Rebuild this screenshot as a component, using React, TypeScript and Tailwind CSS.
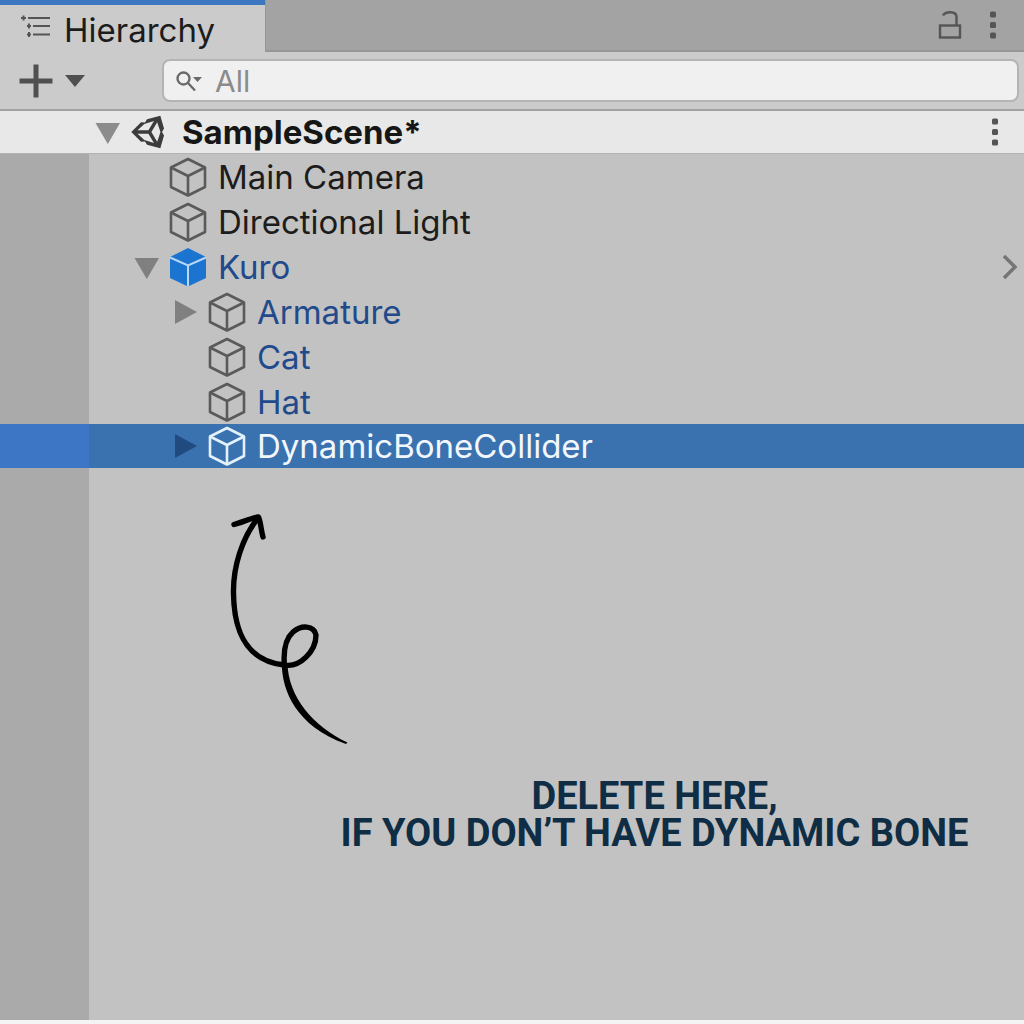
import clsx from "clsx";

type Node = {
  name: string;
  depth: 1 | 2;
  fold?: "open" | "closed";
  prefab?: boolean;
  selected?: boolean;
};

const nodes: Node[] = [
  { name: "Main Camera", depth: 1 },
  { name: "Directional Light", depth: 1 },
  { name: "Kuro", depth: 1, fold: "open", prefab: true },
  { name: "Armature", depth: 2, fold: "closed", prefab: true },
  { name: "Cat", depth: 2, prefab: true },
  { name: "Hat", depth: 2, prefab: true },
  { name: "DynamicBoneCollider", depth: 2, fold: "closed", selected: true },
];

const indent = {
  1: "pl-[45px]",
  2: "pl-[84px]",
};

function FoldArrow({ open, className }: { open: boolean; className: string }) {
  return (
    <svg viewBox="0 0 26 26" className={clsx("w-[26px] h-[26px]", className)} fill="currentColor">
      <path d={open ? "M0.5 4 H25 L12.8 25 Z" : "M2 1 L24 13 L2 25 Z"} />
    </svg>
  );
}

function CubeIcon({ className }: { className: string }) {
  return (
    <svg
      viewBox="0 0 38 40"
      className={clsx("w-[38px] h-10", className)}
      fill="none"
      stroke="currentColor"
      strokeWidth="2.6"
      strokeLinejoin="round"
    >
      <path d="M19 2 L36 10.5 V30 L19 38.5 L2 30 V10.5 Z" />
      <path d="M2 10.5 L19 19 L36 10.5 M19 19 V38.5" />
    </svg>
  );
}

function PrefabIcon() {
  return (
    <svg viewBox="0 0 38 40" className="w-[38px] h-10">
      <path d="M19 1 L37 10 V31 L19 39.5 L1 31 V10 Z" fill="#1a74d0" />
      <path d="M1 10.5 L19 18.5 L37 10.5 M19 18.5 V39.5" fill="none" stroke="#b9d8f4" strokeWidth="2" />
    </svg>
  );
}

function SceneIcon() {
  return (
    <svg viewBox="0 0 24 24" className="w-[34px] h-[34px]" fill="#3c3c3c" fillRule="evenodd">
      <path d="M20.7 0.6 L11.3 3 L9.9 5.3 L7.1 5.2 L0.2 12 L7.1 18.8 L9.9 18.7 L11.3 21 L20.7 23.4 L23.3 14.4 L21.9 12 L23.3 9.6 Z M14.4 12 L18.5 5.2 L20.8 12 L18.5 18.8 Z M16.2 4.2 L12.3 10.8 H4.6 L9.4 6.4 Z M16.2 19.8 L12.3 13.2 H4.6 L9.4 17.6 Z" />
    </svg>
  );
}

function KebabIcon() {
  return (
    <svg viewBox="0 0 8 28" className="w-2 h-7" fill="#555555">
      <rect x="1" y="0.5" width="6" height="6" rx="1.5" />
      <rect x="1" y="11" width="6" height="6" rx="1.5" />
      <rect x="1" y="21.5" width="6" height="6" rx="1.5" />
    </svg>
  );
}

function TabBar() {
  return (
    <div className="flex items-stretch justify-between h-[52px] bg-[#a3a3a3]">
      <button className="flex items-start w-[265px] pt-[5px] pl-[21px] gap-[13px] border-t-5 border-[#3d76c0] bg-[#cbcbcb] text-[#1c1c1c]">
        <svg viewBox="0 0 30 24" className="w-[30px] h-6 mt-1" fill="none" stroke="#555555" strokeWidth="2">
          <path d="M0 4 H5 M2.5 1.5 V6.5 M7 4 H29 M6 12 H10 M8 9.5 V14.5 M12 12 H29 M6 20.5 H10 M8 18 V23 M12 20.5 H29" />
        </svg>
        Hierarchy
      </button>
      <div className="flex grow items-center justify-end gap-[27px] pr-[27px] border-b-2 border-l border-[#979797]">
        <button aria-label="Lock">
          <svg viewBox="0 0 24 30" className="w-6 h-[30px]" fill="none" stroke="#555555" strokeWidth="2.4">
            <rect x="2" y="15.5" width="20" height="12" />
            <path d="M5 5.5 C7 1.5 18.5 0.5 18.5 7 V15.5" />
          </svg>
        </button>
        <button aria-label="Tab options">
          <KebabIcon />
        </button>
      </div>
    </div>
  );
}

function Toolbar() {
  return (
    <div className="flex items-center h-[59px] pl-[19px] pr-[5px] border-b-2 border-[#a2a2a2] bg-[#cbcbcb]">
      <button aria-label="Create" className="flex items-center gap-3 w-[143px]">
        <svg viewBox="0 0 34 34" className="w-[34px] h-[34px]" stroke="#505050" strokeWidth="5">
          <path d="M17 0.5 V33.5 M0.5 17 H33.5" />
        </svg>
        <svg viewBox="0 0 20 12" className="w-5 h-3" fill="#505050">
          <path d="M0 0 H20 L10 12 Z" />
        </svg>
      </button>
      <label className="flex grow items-center h-[43px] pl-3 gap-[13px] rounded-lg border-2 border-[#b4b4b4] bg-[#f0f0f0] text-[30px]">
        <svg viewBox="0 0 26 22" className="w-[26px] h-[22px]" fill="none" stroke="#6a6a6a" strokeWidth="2.4">
          <circle cx="7.5" cy="8.5" r="6" />
          <path d="M12 13 L19 20.5" />
          <path d="M17 7 H26 L21.5 12 Z" fill="#6a6a6a" stroke="none" />
        </svg>
        <input
          type="text"
          aria-label="Search hierarchy"
          placeholder="All"
          className="grow min-w-0 bg-transparent outline-none placeholder:text-[#8b8b8b]"
        />
      </label>
    </div>
  );
}

function SceneRow() {
  return (
    <div className="flex items-center h-[43px] pl-[95px] pr-[25px] border-b border-[#b4b4b4] bg-[#e8e8e8]">
      <FoldArrow open className="text-[#8c8c8c]" />
      <div className="flex grow items-center pl-[10px] gap-[17px]">
        <SceneIcon />
        <span className="font-bold text-[#161616]">SampleScene*</span>
      </div>
      <button aria-label="Scene options">
        <KebabIcon />
      </button>
    </div>
  );
}

function TreeRow({ node }: { node: Node }) {
  const { name, depth, fold, prefab, selected } = node;
  const isRoot = prefab && depth === 1;

  return (
    <li
      className={clsx(
        "grid grid-cols-[89px_1fr]",
        selected ? "h-11 bg-[#3a72b0] text-[#f2f7fc]" : "h-[45px] bg-[#c2c2c2]",
        !selected && (prefab ? "text-[#214a8c]" : "text-[#1c1c1c]"),
      )}
    >
      <div className={selected ? "bg-[#3e76c6]" : "bg-[#aaaaaa]"} />
      <div className={clsx("flex items-center pr-[6px]", indent[depth])}>
        <div className="w-[35px]">
          {fold && <FoldArrow open={fold === "open"} className={selected ? "text-[#204b80]" : "text-[#808080]"} />}
        </div>
        {isRoot ? <PrefabIcon /> : <CubeIcon className={selected ? "text-[#e4f1fc]" : "text-[#5a5a5a]"} />}
        <span className="grow pl-[11px]">{name}</span>
        {isRoot && (
          <button aria-label="Open prefab">
            <svg viewBox="0 0 16 26" className="w-4 h-[26px]" fill="none" stroke="#757575" strokeWidth="3.5">
              <path d="M2 2 L13 13 L2 24" />
            </svg>
          </button>
        )}
      </div>
    </li>
  );
}

function CurlyArrow() {
  return (
    <svg
      viewBox="0 0 120 232"
      className="w-[120px] h-[232px]"
      fill="none"
      stroke="#000000"
      strokeWidth="5.4"
      strokeLinecap="round"
      strokeLinejoin="round"
    >
      <path d="M28 5 C12 25 3 54 3.5 80 C4 123 19 148 54 152 C70 155 86 138 86 122 C84 112 71 112 63 119 C54 127 53.5 142 54.5 153" />
      <path d="M51.7 150 C52 178 66 213 116 231 L117.5 229.5 C84 214 58 184 57.5 150 Z" fill="#000000" stroke="none" />
      <path d="M4 11.5 C13 9 21 5 28.5 4 C31 10 31 17 33 24" />
    </svg>
  );
}

export default function App() {
  return (
    <div className="flex flex-col min-h-screen pb-1 bg-[#f4f4f4] font-['Inter',sans-serif] text-[33px] leading-10">
      <TabBar />
      <Toolbar />
      <SceneRow />
      <ul>
        {nodes.map((node) => (
          <TreeRow key={node.name} node={node} />
        ))}
      </ul>
      <div className="grid grow grid-cols-[89px_1fr] bg-[#c2c2c2]">
        <div className="bg-[#aaaaaa]" />
        <div className="pt-[45px]">
          <div className="pl-[141px]">
            <CurlyArrow />
          </div>
          <p className="pt-[33px] pl-[196px] text-center font-['Roboto',sans-serif] font-bold text-[38px] leading-[37px] text-[#0f2d44]">
            <span className="block">DELETE HERE,</span>
            <span className="block">IF YOU DON’T HAVE DYNAMIC BONE</span>
          </p>
        </div>
      </div>
    </div>
  );
}
